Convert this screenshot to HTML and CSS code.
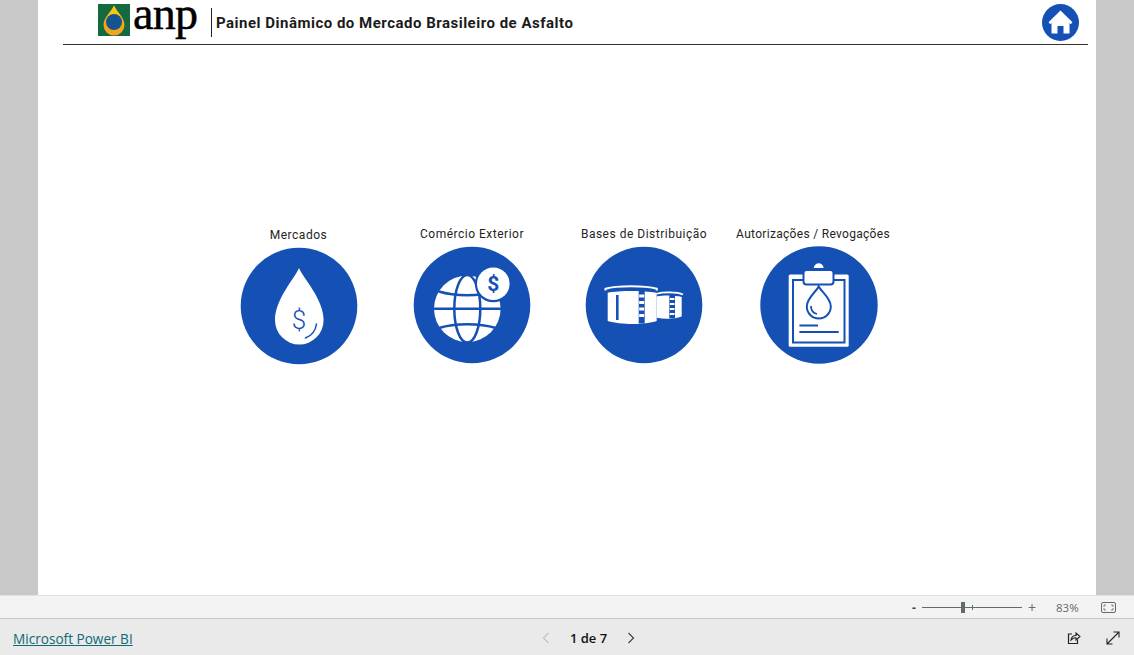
FILE: index.html
```html
<!DOCTYPE html>
<html lang="pt-BR">

<head>
  <meta charset="UTF-8">
  <title>Painel Dinâmico do Mercado Brasileiro de Asfalto</title>
  <link rel="stylesheet" href="styles.css">
</head>

<body>
  <div class="stage">
    <div class="canvas">
      <header class="header">
        <svg class="logo-mark" viewBox="0 0 32 32" width="32" height="32">
          <rect width="32" height="32" fill="#14693f" />
          <path d="M16 1.500C14 7 5.500 13 5.500 21a10.500 10.500 0 0 0 21 0C26.500 13 18 7 16 1.500Z" fill="#f4a21f" />
          <path d="M16 1.500C14.500 5.500 10.500 9.500 8 14.500h16C21.500 9.500 17.500 5.500 16 1.500Z" fill="#f5c814" />
          <circle cx="16" cy="18" r="8" fill="#14548f" />
        </svg>
        <span class="logo-text">anp</span>
        <span class="header-sep"></span>
        <h1 class="title">Painel Dinâmico do Mercado Brasileiro de Asfalto</h1>
        <svg class="home" viewBox="0 0 37 37" width="37" height="37">
          <circle cx="18.500" cy="18.500" r="18.500" fill="#1551b4" />
          <path d="M18.500 6.500 6.500 18.300 8.300 20.200 9.500 19.100V29.500H15.500V22H21.500V29.500H27.500V19.100L28.700 20.200 30.500 18.300Z" fill="#fff" />
        </svg>
      </header>

      <div class="menu">
        <div class="menu-item item-low">
          <div class="menu-label">Mercados</div>
          <svg class="menu-icon" viewBox="0 0 118 118">
            <circle cx="59" cy="59" r="58.300" fill="#1551b4" />
            <path d="M59 21C55 31 35 52 35 73a24.300 24.500 0 0 0 48.600 0C83.600 52 63 31 59 21Z" fill="#fff" />
            <text x="59" y="82" class="glyph glyph-thin" font-size="26">$</text>
            <path d="M65.500 91C71 89 75.500 84 76.500 77" fill="none" stroke="#1551b4" stroke-width="1.500" stroke-linecap="round" />
          </svg>
        </div>

        <div class="menu-item">
          <div class="menu-label">Comércio Exterior</div>
          <svg class="menu-icon" viewBox="0 0 118 118">
            <circle cx="59" cy="59" r="58.300" fill="#1551b4" />
            <circle cx="54.300" cy="62.800" r="33.300" fill="#fff" />
            <g fill="none" stroke="#1551b4" stroke-width="2.500">
              <ellipse cx="54.300" cy="62.800" rx="13" ry="33.800" />
              <path d="M21 62.800H88" />
              <path d="M26 45.500C42 50.500 66 50.500 83 45.500" />
              <path d="M26 82C42 77 66 77 83 82" />
            </g>
            <circle cx="80.300" cy="37.800" r="18.500" fill="#1551b4" />
            <circle cx="80.300" cy="37.800" r="16.300" fill="#fff" />
            <text x="80.300" y="45" class="glyph glyph-bold" font-size="21">$</text>
          </svg>
        </div>

        <div class="menu-item item-tanks">
          <div class="menu-label">Bases de Distribuição</div>
          <svg class="menu-icon" viewBox="0 0 118 118">
            <circle cx="59" cy="59" r="58.300" fill="#1551b4" />
            <!-- small tank, behind -->
            <path d="M71.700 50.500C78 49 90 49 96.700 51V70.500C90 73 80 73.500 71.700 71.800Z" fill="#fff" />
            <path d="M71.700 47.800C78 45.800 92 45.800 98 48.500" fill="none" stroke="#fff" stroke-width="1.600" />
            <rect x="84.300" y="48.500" width="5.700" height="24" fill="#1551b4" />
            <path d="M84.800 53H89.500M84.800 58H89.500M84.800 63H89.500M84.800 68H89.500" stroke="#fff" stroke-width="2.200" />
            <!-- big tank -->
            <path d="M22.700 46.800C34 44.500 58 44.500 71.700 46.800V75C60 79 36 79 22.700 75Z" fill="#fff" />
            <path d="M20.500 44.500V42.800C32 39.500 60 39.500 71.800 42.800V44.500" fill="none" stroke="#fff" stroke-width="2" />
            <rect x="31" y="49" width="2.600" height="25" fill="#1551b4" />
            <rect x="53.700" y="44.500" width="6" height="33" fill="#1551b4" />
            <path d="M54.200 50H59.200M54.200 56.500H59.200M54.200 63H59.200M54.200 69.500H59.200" stroke="#fff" stroke-width="3" />
          </svg>
        </div>

        <div class="menu-item">
          <div class="menu-label label-shift">Autorizações / Revogações</div>
          <svg class="menu-icon" viewBox="0 0 118 118">
            <circle cx="59" cy="59" r="58.700" fill="#1551b4" />
            <rect x="28.700" y="28.500" width="60" height="72.300" rx="1.500" fill="#fff" />
            <rect x="33" y="34" width="51.500" height="62.500" fill="none" stroke="#1551b4" stroke-width="2" />
            <path d="M53.700 22C54.500 15.500 63 15.500 63.700 22Z" fill="#fff" />
            <rect x="43.500" y="24" width="30" height="14.500" rx="3" fill="#fff" stroke="#1551b4" stroke-width="2" />
            <path d="M58.700 40.500C56 46 46.800 52 46.800 60.500a12 12 0 0 0 24 0C70.800 52 61.500 46 58.700 40.500Z" fill="#fff" stroke="#1551b4" stroke-width="2" />
            <path d="M51 60C51 64 53 67 57 68" fill="none" stroke="#1551b4" stroke-width="1.800" />
            <path d="M39.400 79.500H58M39.400 86H78.700" stroke="#1551b4" stroke-width="2" />
          </svg>
        </div>
      </div>
    </div>
  </div>

  <div class="zoom-bar">
    <span class="zoom-minus">-</span>
    <div class="slider">
      <span class="slider-tick"></span>
      <span class="slider-thumb"></span>
    </div>
    <span class="zoom-plus">+</span>
    <span class="zoom-value">83%</span>
    <svg class="fit-icon" viewBox="0 0 15 11" width="15" height="11">
      <rect x="0.500" y="0.500" width="14" height="10" rx="1.500" fill="none" stroke="#5f6b6d" />
      <path d="M3 5V3H5M10 3H12V5M12 6V8H10M5 8H3V6" fill="none" stroke="#5f6b6d" stroke-width="0.800" />
    </svg>
  </div>

  <footer class="footer">
    <a class="pbi-link" href="#">Microsoft Power BI</a>
    <div class="pager">
      <svg class="chevron" viewBox="0 0 8 12" width="8" height="12">
        <path d="M6.500 1 1.500 6 6.500 11" fill="none" stroke="#c4c4c4" stroke-width="1.200" />
      </svg>
      <span class="page-text">1 de 7</span>
      <svg class="chevron" viewBox="0 0 8 12" width="8" height="12">
        <path d="M1.500 1 6.500 6 1.500 11" fill="none" stroke="#444" stroke-width="1.200" />
      </svg>
    </div>
    <div class="footer-actions">
      <svg viewBox="0 0 14 14" width="14" height="14">
        <path d="M5 3H1.500V12.500H10.500V8.500" fill="none" stroke="#252423" stroke-width="1.200" />
        <path d="M4 9C4.500 6 7 4.500 9 4.500V2L13 5.500 9 9V6.700C7 6.700 5.500 7.500 4 9Z" fill="none" stroke="#252423" stroke-width="1.100" />
      </svg>
      <svg viewBox="0 0 14 14" width="14" height="14">
        <path d="M1 13 13 1M7.500 1H13V6.500M1 7.500V13H6.500" fill="none" stroke="#252423" stroke-width="1.100" />
      </svg>
    </div>
  </footer>
</body>

</html>
```

FILE: styles.css
```css
* {
  margin: 0;
  padding: 0;
  box-sizing: border-box;
}

html,
body {
  height: 100%;
  overflow: hidden;
  font-family: "Open Sans", sans-serif;
}

body {
  display: flex;
  flex-direction: column;
  background: #eaeaea;
}

/* Report area: grey sides, white page in the middle */
.stage {
  height: 595px;
  padding: 0 38px;
  background: #c8c8c8;
}

.canvas {
  height: 100%;
  background: #fff;
  overflow: hidden;
}

.header {
  display: flex;
  align-items: center;
  height: 45px;
  margin: 0 8px 0 25px;
  padding: 0 9px 3px 35px;
  border-bottom: 1px solid #333;
}

.logo-mark {
  flex-shrink: 0;
  margin-bottom: 2px;
}

.logo-text {
  width: 81px;
  height: 36px;
  margin-bottom: 4px;
  padding-left: 3px;
  font-family: "Liberation Serif", serif;
  font-size: 46px;
  line-height: 26px;
  letter-spacing: -0.7px;
  -webkit-text-stroke: 0.5px #000;
  color: #000;
}

.header-sep {
  width: 1px;
  height: 29px;
  margin-top: 4px;
  background: #222;
}

.title {
  flex: 1;
  padding: 4px 0 0 4px;
  font-family: Roboto, sans-serif;
  font-size: 15px;
  font-weight: 700;
  letter-spacing: 0.5px;
  color: #1b1b1b;
}

.home {
  margin-top: 4px;
}

/* Four round shortcuts */
.menu {
  display: flex;
  padding: 181px 0 0 201.500px;
  gap: 55.500px;
}

.menu-item {
  display: flex;
  flex-direction: column;
  align-items: center;
  width: 118px;
}

.item-low {
  margin-top: 1px;
}

.item-tanks {
  margin-left: -1.500px;
  margin-right: 1px;
}

.menu-label {
  height: 20px;
  font-family: Roboto, sans-serif;
  font-size: 12px;
  line-height: 16px;
  letter-spacing: 0.5px;
  white-space: nowrap;
  color: #252423;
}

.label-shift {
  margin-right: 11px;
  letter-spacing: 0.3px;
}

.menu-icon {
  display: block;
  width: 118px;
  height: 118px;
}

.glyph {
  text-anchor: middle;
  fill: #1551b4;
}

.glyph-thin {
  font-family: Roboto, sans-serif;
  font-weight: 300;
}

.glyph-bold {
  font-family: Roboto, sans-serif;
  font-weight: 700;
}

/* Zoom strip */
.zoom-bar {
  display: flex;
  align-items: center;
  height: 24px;
  padding-left: 912px;
  background: #f3f3f3;
  border-top: 1px solid #e1e1e1;
  border-bottom: 1px solid #c8c8c8;
  color: #5f6b6d;
  font-size: 12px;
}

.zoom-minus {
  width: 10px;
  font-weight: 700;
  color: #444;
}

.slider {
  position: relative;
  width: 100px;
  height: 1px;
  background: #5f6b6d;
}

.slider-thumb {
  position: absolute;
  left: 39px;
  top: -5px;
  width: 4px;
  height: 11px;
  background: #5f6b6d;
}

.slider-tick {
  position: absolute;
  left: 50px;
  top: -2px;
  width: 1px;
  height: 5px;
  background: #5f6b6d;
}

.zoom-plus {
  width: 34px;
  padding-left: 6px;
  font-size: 14px;
}

.zoom-value {
  width: 45px;
  font-size: 11.500px;
}

.footer {
  display: flex;
  align-items: center;
  flex: 1;
  padding: 1px 0 0 13px;
}

.pbi-link {
  width: 120px;
  padding-top: 1px;
  font-size: 13.600px;
  color: #0f6b73;
  white-space: nowrap;
}

.pager {
  display: flex;
  align-items: center;
  margin-left: 409px;
}

.page-text {
  width: 77px;
  text-align: center;
  font-size: 13px;
  font-weight: 600;
  color: #111;
}

.footer-actions {
  display: flex;
  gap: 25px;
  margin-left: 432px;
}
```
